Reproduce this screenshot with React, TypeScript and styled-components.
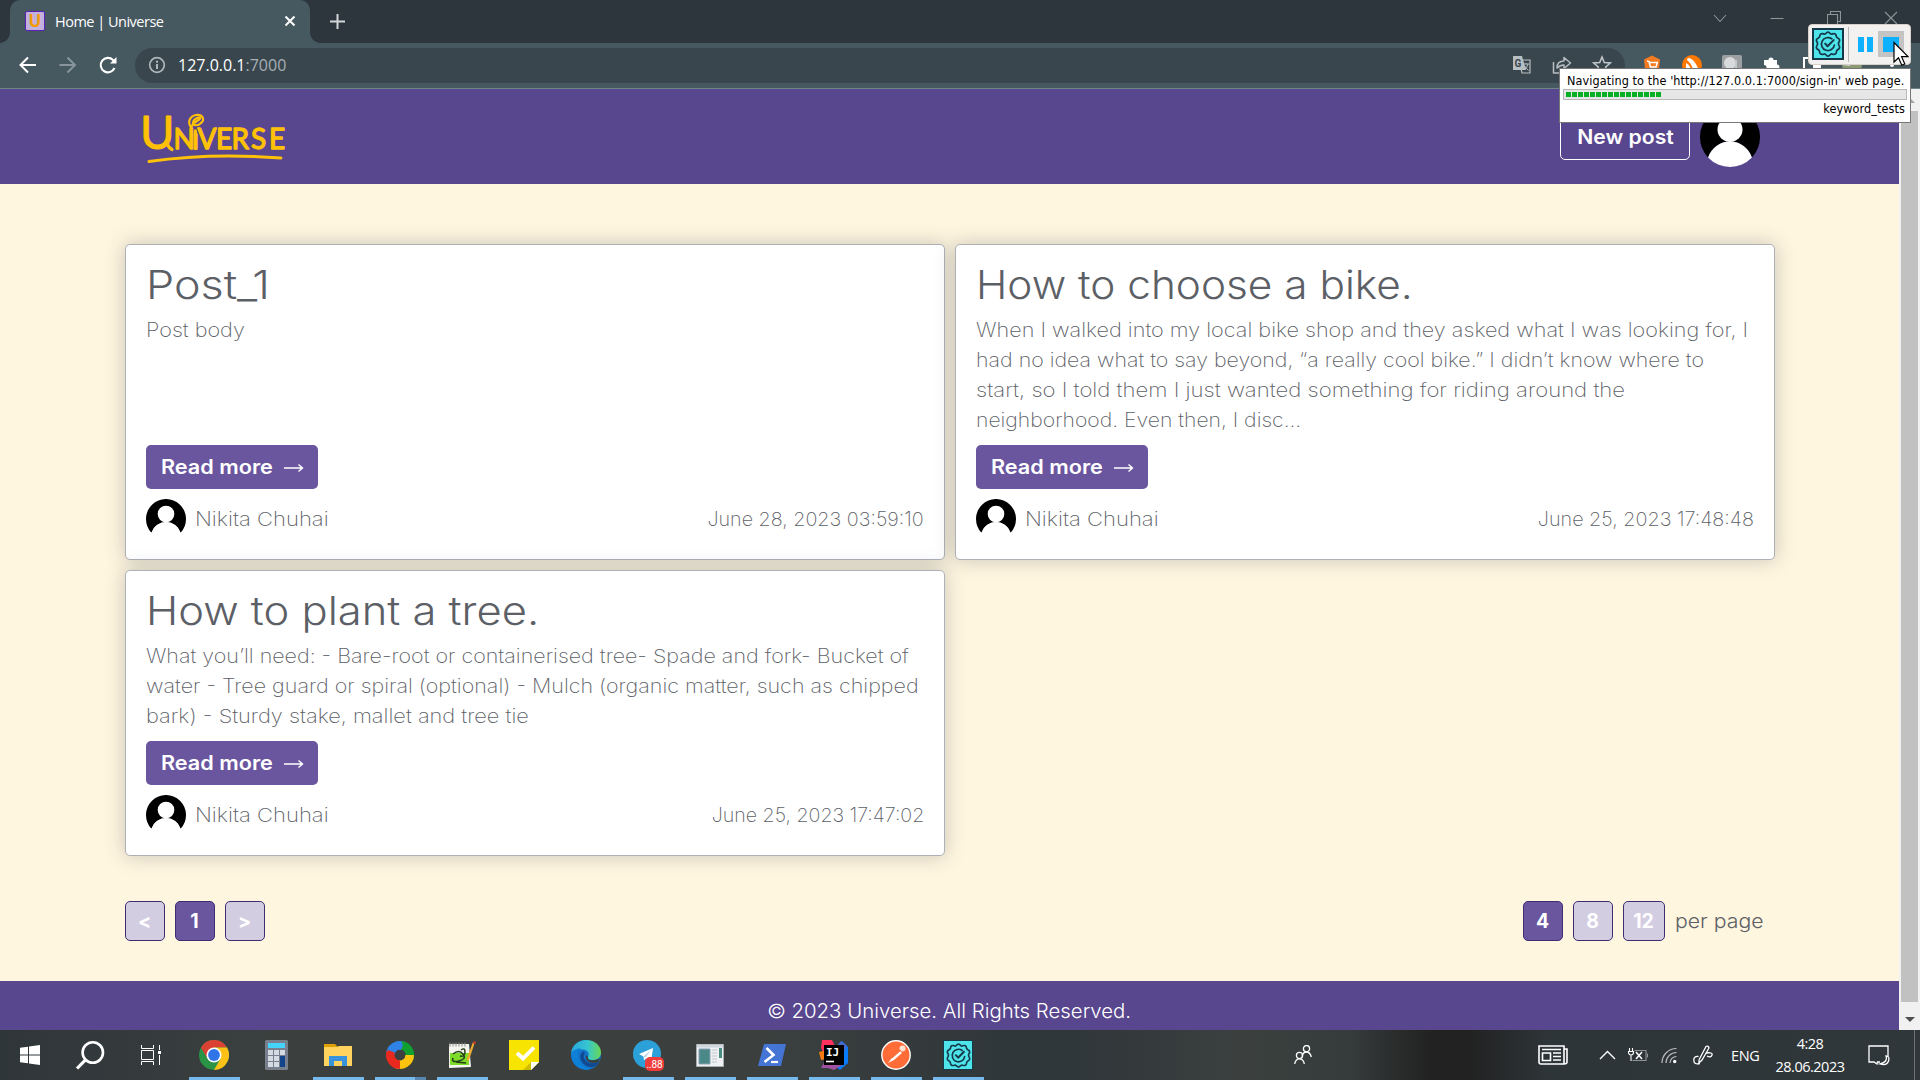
import React from 'react';
import styled, { createGlobalStyle } from 'styled-components';

const GlobalStyle = createGlobalStyle`
  *, *::before, *::after { box-sizing: border-box; }
  html, body { margin: 0; padding: 0; overflow: hidden; }
  svg { display: block; flex: none; }
`;

const uiFont = `'Open Sans', 'Noto Sans', sans-serif`;
const siteFont = `Inter, 'Open Sans', sans-serif`;

const Screen = styled.div`
  position: relative;
  display: flex;
  flex-direction: column;
  width: 1920px;
  height: 1080px;
  overflow: hidden;
  background: #fff6df;
  font-family: ${uiFont};
`;

/* Widened lettering for the site typeface. */
const Wide = styled.span<{ $stretch: number; $from?: string }>`
  display: inline-block;
  transform: scaleX(${(p) => p.$stretch});
  transform-origin: ${(p) => p.$from ?? 'left'} center;
  white-space: nowrap;
`;

/* ---------- browser chrome ---------- */

const TabStrip = styled.div`
  display: flex;
  flex: none;
  height: 43px;
  padding-left: 10px;
  background: #2c363c;
`;

const Tab = styled.div`
  position: relative;
  display: flex;
  align-items: center;
  width: 300px;
  height: 43px;
  padding: 0 14px 1px 15px;
  border-radius: 10px 10px 0 0;
  background: #465860;
  &::before, &::after {
    content: '';
    position: absolute;
    bottom: 0;
    width: 10px;
    height: 10px;
  }
  &::before { left: -10px; background: radial-gradient(circle at 0 0, transparent 9.5px, #465860 10px); }
  &::after { right: -10px; background: radial-gradient(circle at 100% 0, transparent 9.5px, #465860 10px); }
`;

const Favicon = styled.span`
  display: flex;
  align-items: center;
  justify-content: center;
  width: 20px;
  height: 20px;
  border: 1px solid #5b21b6;
  border-radius: 2px;
  background: #c3b1dd;
  color: #f09a0c;
  font: 700 17px/18px 'Open Sans', sans-serif;
`;

const TabTitle = styled.span`
  flex: 1;
  margin-left: 10px;
  color: #fff;
  font-size: 14.5px;
  letter-spacing: -0.5px;
`;

const NewTab = styled.div`
  display: flex;
  align-items: center;
  margin-left: 20px;
  padding-bottom: 1px;
`;

const WindowButtons = styled.div`
  display: flex;
  gap: 43px;
  margin: 11px 22px 0 auto;
`;

const Toolbar = styled.div`
  display: flex;
  flex: none;
  align-items: center;
  height: 46px;
  padding: 0 18px 1px;
  border-bottom: 1px solid #6f8487;
  background: #465860;
`;

const NavButtons = styled.div`
  display: flex;
  gap: 20px;
  width: 117px;
`;

const AddressBar = styled.div`
  display: flex;
  align-items: center;
  width: 1490px;
  height: 35px;
  padding: 0 13px 0 13px;
  border-radius: 18px;
  background: #3a464d;
`;

const Url = styled.span`
  flex: 1;
  margin-left: 12px;
  color: #fff;
  font-size: 16px;
`;

const Port = styled.span`
  color: #a5b0b5;
`;

const AddressActions = styled.div`
  display: flex;
  gap: 20px;
`;

const Extensions = styled.div`
  display: flex;
  gap: 20px;
  margin-left: 17px;
`;

/* ---------- site ---------- */

const Viewport = styled.div`
  display: flex;
  flex: 1;
  min-height: 0;
`;

const Site = styled.div`
  display: flex;
  flex-direction: column;
  width: 1899px;
  background: #fff6df;
  font-family: ${siteFont};
`;

const SiteHeader = styled.header`
  display: flex;
  flex: none;
  align-items: center;
  justify-content: space-between;
  height: 95px;
  padding: 0 139px 0 136px;
  background: #58468e;
`;

const HeaderActions = styled.div`
  display: flex;
  align-items: center;
  gap: 10px;
`;

const NewPostButton = styled.button`
  width: 130px;
  height: 46px;
  padding: 0;
  border: 1px solid #fff;
  border-radius: 5px;
  background: transparent;
  color: #fff;
  font: 600 19.5px/30px ${siteFont};
`;

const Main = styled.main`
  display: flex;
  flex: 1;
  flex-direction: column;
  justify-content: space-between;
  padding: 60px 124px 40px 125px;
`;

const PostGrid = styled.section`
  display: grid;
  grid-template-columns: 820px 820px;
  grid-template-rows: 316px 286px;
  gap: 10px;
`;

const Card = styled.article`
  display: flex;
  flex-direction: column;
  padding: 16px 20px 20px;
  border: 1px solid #adb0b5;
  border-radius: 5px;
  background: #fff;
  box-shadow: 0 0 20px rgba(40, 50, 75, 0.26);
`;

const CardTitle = styled.h2`
  margin: 0 0 6px;
  color: #5c6066;
  font-size: 39px;
  font-weight: 300;
  line-height: 48px;
`;

const CardBody = styled.div`
  flex: 1;
`;

const BodyLine = styled.div`
  height: 30px;
  color: #5c6066;
  font-size: 19.5px;
  font-weight: 250;
  line-height: 30px;
`;

const ReadMore = styled.button`
  display: flex;
  align-items: center;
  justify-content: space-between;
  width: 172px;
  height: 44px;
  padding: 0 14px 0 15px;
  border: 0;
  border-radius: 5px;
  background: #6a569f;
  color: #fff;
  font: 600 19.5px/30px ${siteFont};
`;

const CardFooter = styled.footer`
  display: flex;
  align-items: center;
  height: 40px;
  margin-top: 10px;
  color: #5c6066;
  font-size: 19.5px;
  font-weight: 250;
`;

const Author = styled.span`
  flex: 1;
  margin-left: 9px;
`;

const PagerRow = styled.nav`
  display: flex;
  justify-content: space-between;
`;

const PagerGroup = styled.div`
  display: flex;
  align-items: center;
  gap: 10px;
  color: #5c6066;
  font-size: 19.5px;
`;

const PageButton = styled.button<{ $active?: boolean; $width?: number }>`
  width: ${(p) => p.$width ?? 40}px;
  height: 40px;
  padding: 0 1px 0 0;
  border: 1px solid #3f2d74;
  border-radius: 5px;
  background: ${(p) => (p.$active ? '#6a569f' : '#d3cde2')};
  color: #fff;
  font: 700 19.5px/30px ${siteFont};
`;

const PerPage = styled.span`
  width: 100px;
  font-weight: 350;
`;

const SiteFooter = styled.footer`
  flex: none;
  height: 49px;
  padding-top: 15px;
  background: #58468e;
  color: #fff;
  font-size: 19.5px;
  font-weight: 300;
  line-height: 30px;
  text-align: center;
`;

const Scrollbar = styled.div`
  display: flex;
  flex-direction: column;
  align-items: center;
  justify-content: space-between;
  width: 21px;
  padding: 9px 0 8px;
  background: #f1f1f1;
`;

const ScrollThumb = styled.div`
  width: 17px;
  height: 891px;
  margin: 7px 0 15px;
  background: #c1c1c1;
`;

const ScrollArrow = styled.div<{ $up?: boolean }>`
  width: 0;
  height: 0;
  border: 5px solid transparent;
  ${(p) => (p.$up ? 'border-top: 0; border-bottom-color: #a3a3a3;' : 'border-bottom: 0; border-top-color: #505050;')}
`;

/* ---------- test runner overlay ---------- */

const RunnerBar = styled.div`
  position: absolute;
  top: 24px;
  left: 1808px;
  display: flex;
  align-items: center;
  width: 103px;
  height: 41px;
  padding: 0 6px 1px 3px;
  border: 1px solid #d8cfcb;
  border-radius: 4px;
  background: #f3f1f0;
`;

const RunnerBadge = styled.div`
  display: flex;
  align-items: center;
  justify-content: center;
  width: 32px;
  height: 32px;
  border: 2px solid #17384a;
  background: #4de4ea;
`;

const RunnerDivider = styled.div`
  width: 1px;
  height: 35px;
  margin: 0 9px 0 4px;
  background: #b5b5b5;
`;

const PauseMark = styled.div`
  width: 16px;
  height: 15px;
  border: solid #0db1ff;
  border-width: 0 6px;
`;

const StopButton = styled.div`
  display: flex;
  align-items: center;
  justify-content: center;
  width: 26px;
  height: 26px;
  margin-left: 5px;
  background: #c4c4c4;
`;

const StopMark = styled.div`
  width: 16px;
  height: 15px;
  background: #0db1ff;
`;

const Cursor = styled.div`
  position: absolute;
  top: 41px;
  left: 1893px;
`;

const RunnerStatus = styled.div`
  position: absolute;
  top: 68px;
  left: 1559px;
  width: 352px;
  height: 55px;
  padding: 4px 3px 0;
  border: 1px solid #777;
  background: #fff;
  color: #000;
  font: 12.5px/16px 'DejaVu Sans Condensed', 'DejaVu Sans', sans-serif;
  font-stretch: condensed;
  letter-spacing: 0.1px;
  white-space: nowrap;
`;

const StatusText = styled.div`
  padding-left: 4px;
`;

const StatusProject = styled.div`
  padding: 1px 2px 0;
  letter-spacing: 0.1px;
  text-align: right;
`;

const ProgressTrack = styled.div`
  display: flex;
  gap: 1px;
  height: 11px;
  padding: 2px;
  border: 1px solid #b8b8b8;
  background: #e6e6e6;
`;

const ProgressBlock = styled.i`
  width: 5px;
  height: 5px;
  background: #06b025;
`;

/* ---------- taskbar ---------- */

const Taskbar = styled.div`
  display: flex;
  flex: none;
  height: 50px;
  background: linear-gradient(90deg, #2f363a 0, #3b403f 280px, #3b403f 760px, #30373a 1000px, #30373a 1080px, #3b403f 1240px, #363b3b 1350px, #222 1430px, #222 1470px, #2e3538 1550px, #30373a 1920px);
`;

const TaskCell = styled.div<{ $width?: number }>`
  display: flex;
  flex-direction: column;
  align-items: center;
  justify-content: space-between;
  width: ${(p) => p.$width ?? 62}px;
  height: 50px;
`;

const TaskIcon = styled.div`
  display: flex;
  align-items: center;
  justify-content: center;
  height: 47px;
  padding-top: 3px;
`;

const RunningMark = styled.div<{ $stacked?: boolean }>`
  width: 51px;
  height: 3px;
  border-right: ${(p) => (p.$stacked ? '11px solid #5886ae' : '0')};
  background: #76b9ed;
`;

const Tray = styled.div`
  display: flex;
  flex: 1;
  align-items: center;
  margin-left: 118px;
  color: #fff;
`;

const TraySlot = styled.div<{ $gap: number }>`
  margin-left: ${(p) => p.$gap}px;
`;

const Language = styled.span`
  width: 28px;
  margin-left: 18px;
  font-size: 14.5px;
  letter-spacing: -0.4px;
`;

const Clock = styled.div`
  display: flex;
  flex-direction: column;
  width: 76px;
  margin-left: 13px;
  font-size: 14.5px;
  line-height: 23px;
  letter-spacing: -0.5px;
  text-align: center;
`;

const ShowDesktop = styled.div`
  width: 6px;
  height: 50px;
  margin-left: auto;
  border-left: 1px solid #6c7173;
`;

/* ---------- drawings ---------- */

const Logo = () => (
  <svg width="156" height="76" viewBox="136 99 156 76" fill="#ffc107" stroke="#ffc107" strokeLinejoin="round">
    <text x="140 173.500 192.300 197.500 216 231.500 251 269" y="149" fontFamily="Lato, sans-serif" fontSize="28" strokeWidth="1.300">
      <tspan fontSize="47" strokeWidth="0.900">U</tspan>NıVERSE
    </text>
    <g fill="none" strokeLinecap="round">
      <path d="M195.300 148.500V131" strokeWidth="3.400" />
      <path d="M167 144q2 4 5 5.500" strokeWidth="3.400" />
      <path d="M191 127c-4-5-1-11 5-12 7-1 9 5 5 8-4 4-9 2-8-1s5-5 7-4c1 2-6 3-8 8" strokeWidth="2.200" />
      <path d="M149 161.500C190 155.500 235 154.500 281 158" strokeWidth="3" />
    </g>
  </svg>
);

const Avatar = ({ size }: { size: number }) => (
  <svg width={size} height={size} viewBox="0 0 60 60">
    <path d="M8.100 50.500A30 30 0 1 1 51.900 50.500A23 23 0 0 0 8.100 50.500Z" />
    <path d="M8.100 50.500A23 23 0 0 1 51.900 50.500A30 30 0 0 1 8.100 50.500Z" fill="#fff" />
    <circle cx="30" cy="22.500" r="12.500" fill="#fff" />
  </svg>
);

const LongArrow = () => (
  <svg width="20" height="10" viewBox="0 0 20 10" fill="none" stroke="#fff" strokeWidth="1.400">
    <path d="M0 6h18.500M14.500 2.500 18.500 6l-4 3.500" />
  </svg>
);

const Gear = ({ size, color }: { size: number; color: string }) => (
  <svg width={size} height={size} viewBox="-12 -12 24 24" fill="none" stroke={color} strokeWidth="1.600" strokeLinejoin="round" strokeLinecap="round">
    <path d="M-2.200-9.500Q0-12.500 2.200-9.500Q3-8.800 4-9.300Q7.500-10.500 7.700-7Q8-6 9-5.600Q12-4 9.900-1.500Q9.400-.5 9.900.800Q12 4 9 5.200Q8 5.600 7.800 7Q7.500 10.500 4 9.300Q3 8.900 2.200 9.700Q0 12.500-2.200 9.700Q-3 8.900-4 9.300Q-7.500 10.500-7.800 7Q-8 5.600-9 5.200Q-12 4-9.900.8Q-9.400-.5-9.900-1.500Q-12-4-9-5.600Q-8-6-7.700-7Q-7.500-10.500-4-9.300Q-3-8.800-2.200-9.500Z" />
    <path d="M3.500-4.800A6 6 0 1 0 5.900 1" />
    <path d="m-2.600-.3 2.200 2.400L5.200-3.600" strokeWidth="1.900" />
  </svg>
);

const BackArrow = ({ flip }: { flip?: boolean }) => (
  <svg width="20" height="20" viewBox="0 0 20 20" fill="none" stroke={flip ? '#87959b' : '#fff'} strokeWidth="2">
    <path d={flip ? 'M1.500 10h15M9.500 2.500 17 10l-7.500 7.500' : 'M18 10H3M10 2.500 2.500 10l7.500 7.500'} />
  </svg>
);

const Reload = () => (
  <svg width="20" height="20" viewBox="0 0 20 20" fill="none" stroke="#fff" strokeWidth="2.100">
    <path d="M16.500 13A7.200 7.200 0 1 1 15 5l2 2.200" />
    <path d="M18.500 2v6.500H12z" fill="#fff" stroke="none" />
  </svg>
);

const InfoIcon = () => (
  <svg width="18" height="18" viewBox="0 0 18 18" fill="none" stroke="#aeb6ba" strokeWidth="1.700">
    <circle cx="9" cy="9" r="7.300" />
    <path d="M9 8v5M9 4.800v1.900" strokeWidth="2" />
  </svg>
);

const WindowIcon = ({ d }: { d: string }) => (
  <svg width="14" height="14" viewBox="0 0 14 14" fill="none" stroke="#8d9599" strokeWidth="1.100">
    <path d={d} />
  </svg>
);

const Translate = () => (
  <svg width="20" height="20" viewBox="0 0 20 20">
    <path d="M7 5h11v13h-8z" fill="none" stroke="#b8bfc2" strokeWidth="1.200" />
    <path d="M1 1h9l4 14H1z" fill="#b8bfc2" />
    <text x="2.500" y="11.500" fontSize="10" fontWeight="700" fill="#3a464d" fontFamily="Roboto">G</text>
    <path d="M11 9h6M14 8v1M16 9q-1 4-4 6M12.500 11l4 4.500" stroke="#b8bfc2" fill="none" />
  </svg>
);

const Share = () => (
  <svg width="20" height="20" viewBox="0 0 20 20" fill="none" stroke="#b8bfc2" strokeWidth="1.500" strokeLinejoin="round">
    <path d="M1.500 7v11H16v-4" />
    <path d="M5 13c0-5 3-7 7-7V2.500L18.500 8 12 13.500V10c-3 0-5 1-7 3z" />
  </svg>
);

const Star = () => (
  <svg width="20" height="20" viewBox="0 0 20 20" fill="none" stroke="#c3c9cc" strokeWidth="1.500">
    <path d="m10 2 2.300 5.600 6 .4-4.600 3.900 1.500 5.800L10 14.500l-5.200 3.200 1.500-5.800L1.700 8l6-.4z" />
  </svg>
);

const ShopExtension = () => (
  <svg width="20" height="20" viewBox="0 0 20 20">
    <path d="m10 .5 8 4L17 14l-7 5-7-5L2 4.500z" fill="#f47b20" />
    <path d="m5 6 2 .5L8.500 12H14l1.300-4.500H7.200M8 14.500h1M13 14.500h1" fill="none" stroke="#fff" strokeWidth="1.500" />
  </svg>
);

const AvastExtension = () => (
  <svg width="20" height="20" viewBox="0 0 20 20">
    <circle cx="10" cy="10" r="10" fill="#ff7800" />
    <path d="M5 5q0-2 2-2 5 1 9 10-2 3-5 1Q9 8 5 5z" fill="#fff" />
    <path d="M4 8q4 2 5 7-3 2-5-1z" fill="#fff" />
  </svg>
);

const GreyExtension = () => (
  <svg width="20" height="20" viewBox="0 0 20 20">
    <rect width="20" height="20" rx="2" fill="#9ca0a3" />
    <circle cx="8" cy="8" r="6" fill="#d9dadb" />
    <path d="M14 5v10H9" fill="none" stroke="#c5c8ca" strokeWidth="2" />
  </svg>
);

const Puzzle = () => (
  <svg width="20" height="20" viewBox="0 0 20 20" fill="#fff">
    <path d="M2 5h4.500a2.500 2.500 0 1 1 5 0H15v4.500a2.500 2.500 0 1 1 0 5V19H2v-4a2.500 2.500 0 1 0 0-5z" />
  </svg>
);

const SidePanel = () => (
  <svg width="20" height="20" viewBox="0 0 20 20">
    <path d="M2 3h16v14H2z" fill="none" stroke="#fff" strokeWidth="2" />
    <path d="M11 3h7v14h-7z" fill="#fff" />
  </svg>
);

const ProfilePicture = () => (
  <svg width="20" height="20" viewBox="0 0 20 20">
    <circle cx="10" cy="10" r="10" fill="#8b9a72" />
    <path d="M0 10a10 10 0 0 1 8-9.800V11z" fill="#cfd8dc" />
  </svg>
);

const MenuDots = () => (
  <svg width="20" height="20" viewBox="0 0 20 20" fill="#fff">
    <circle cx="10" cy="4" r="2" /><circle cx="10" cy="10" r="2" /><circle cx="10" cy="16" r="2" />
  </svg>
);

const Windows = () => (
  <svg width="20" height="20" viewBox="0 0 20 20" fill="#fff">
    <path d="M0 2.800 8 1.700V9.500H0zM9 1.500 20 0v9.500H9zM0 10.500h8v7.800L0 17.200zM9 10.500h11V20L9 18.500z" />
  </svg>
);

const SearchIcon = () => (
  <svg width="30" height="30" viewBox="0 0 30 30" fill="none" stroke="#fff">
    <circle cx="17.800" cy="12.500" r="10.200" strokeWidth="2.600" />
    <path d="M10.500 19.800 2 28.500" strokeWidth="3.200" />
  </svg>
);

const TaskView = () => (
  <svg width="24" height="20" viewBox="0 0 24 20" fill="none" stroke="#fff">
    <path d="M1.500 0v3.500h12V0M1.500 20v-3.500h12V20M1.500 5.500h12v9h-12zM19.500 0v5M19.500 10v10" />
    <path d="M18 6h3v3h-3z" fill="#fff" stroke="none" />
  </svg>
);

const Chrome = () => (
  <svg width="30" height="30" viewBox="-15 -15 30 30">
    <circle r="15" fill="#2a9346" />
    <path d="M-13-7.500A15 15 0 0 1 13-7.500H0L-6.500 3.800z" fill="#dc4234" />
    <path d="M13-7.500A15 15 0 0 1 0 15L6.500 3.800 0-7.500z" fill="#fbc116" />
    <circle r="7.500" fill="#fff" />
    <circle r="5.900" fill="#2f75e8" />
  </svg>
);

const Calculator = () => (
  <svg width="23" height="30" viewBox="0 0 23 30">
    <rect width="23" height="30" rx="1.500" fill="#77808c" />
    <rect x="3" y="3" width="17" height="5" fill="#43d3fb" />
    <path d="M3 10h5v5H3zM9 10h5v5H9zM15 10h5v5h-5zM3 16h5v5H3zM9 16h5v5H9zM3 22h5v5H3zM9 22h5v5H9z" fill="#d3dae2" />
    <path d="M15 16h5v11h-5z" fill="#11448a" />
  </svg>
);

const Folder = () => (
  <svg width="28" height="24" viewBox="0 0 28 24">
    <path d="M0 1h11l3 3-3 3H0z" fill="#dea004" />
    <path d="M0 4h13l2-1h13v20H0z" fill="#ffd35d" />
    <path d="M5 23V13h18v10h-5v-5h-8v5z" fill="#3794dc" />
  </svg>
);

const ColorRing = () => (
  <svg width="30" height="30" viewBox="-15 -15 30 30" fill="none" strokeWidth="8.500">
    <path d="M-9.700 0A9.700 9.700 0 0 1 4-8.800" stroke="#2f83e8" />
    <path d="M0-9.700A9.700 9.700 0 0 1 9 4" stroke="#10a030" />
    <path d="M9.700 0A9.700 9.700 0 0 1-4 8.800" stroke="#fbc20e" />
    <path d="M0 9.700A9.700 9.700 0 0 1-9-3.800" stroke="#e9291d" />
    <path d="M-13.500-3Q-7-10 0-5 5-9 1-14-10-13-13.500-3z" fill="#2f83e8" stroke="none" />
  </svg>
);

const NotepadPlus = () => (
  <svg width="28" height="28" viewBox="0 0 28 28">
    <path d="M1 3h20l2 23-22 1z" fill="#f4f5ee" />
    <path d="M2 12h19v12H2z" fill="#7ddc2a" />
    <path d="M2 1.500v4M5 1.500v4M8 1.500v4M11 1.500v4M14 1.500v4M17 1.500v4" stroke="#888" />
    <path d="M5 13q6-5 10 0t-4 7-6-3M13 9q4-3 4 2t-5 4M8 21l10 1" fill="none" stroke="#263d1b" strokeWidth="1.500" />
    <path d="m27 1-6 18-2 1v-3L25 1z" fill="#eda92c" />
    <circle cx="26.500" cy="1.500" r="1.500" fill="#bd3a2e" />
  </svg>
);

const StickyNote = () => (
  <svg width="30" height="30" viewBox="0 0 30 30">
    <path d="M0 0h30v22l-8 8H0z" fill="#f7e400" />
    <path d="M14 30 22 22h8l-8 8z" fill="#cfbe00" />
    <path d="M22 22h8l-8 8z" fill="#fff" />
    <path d="m8 13 6 5.500L25 7.500" fill="none" stroke="#fff" strokeWidth="3.800" />
  </svg>
);

const Edge = () => (
  <svg width="30" height="30" viewBox="0 0 30 30">
    <defs>
      <linearGradient id="edgeTop"><stop stopColor="#2aa7df" /><stop offset=".55" stopColor="#35c5d0" /><stop offset="1" stopColor="#68d852" /></linearGradient>
    </defs>
    <circle cx="15" cy="15" r="15" fill="#1273ca" />
    <path d="M0 13C1 5 8 0 15 0c9 0 15 6 15 12.500 0 5-4 7.500-8 7.500-4 0-6-1-5-3 2-3 0-7-5-7.500Q4 9 0 13z" fill="url(#edgeTop)" />
    <path d="M0 13q4-5 10-4.500Q5 13 8 20t12 9Q13 31 7 27T0 13z" fill="#0f80d8" />
    <path d="M12 11q-5 5-1 11t11 5q4-1 6-5-9 3-13-1t-1-8z" fill="#114a91" />
    <path d="M17 17q-1 4 7 3l5-1.500-1 3.500q-6 2-10 0t-3-7z" fill="#3b403f" />
  </svg>
);

const Telegram = () => (
  <svg width="32" height="32" viewBox="1 0 32 32">
    <circle cx="16" cy="15" r="14" fill="#2ca0d8" />
    <path d="m8 15 14-6-2 14-5-3.500-2 2-.5-4z" fill="#fff" />
    <path d="m12.500 17.500 8-7-6 8" fill="#b8d6e8" />
    <rect x="14" y="18" width="19" height="14" rx="5" fill="#ee3c3a" />
    <text x="15.500" y="29" fontSize="10" fill="#fff" fontFamily="Roboto" textLength="16">..88</text>
  </svg>
);

const AppWindow = () => (
  <svg width="28" height="24" viewBox="0 0 28 24">
    <path d="M.5 1.500h27v22H.5z" fill="#eef0f1" stroke="#a9adb0" />
    <path d="M1 1.500h26v3H1z" fill="#cfd6dc" />
    <path d="M3 6h11v15H3z" fill="#4b8888" stroke="#8aa0b5" />
    <path d="M16 7h5M16 10h5M16 13h5M16 16h5M16 19h5" stroke="#c3c7cb" />
    <path d="M23 5h3v10h-3z" fill="#4b8c80" />
  </svg>
);

const PowerShell = () => (
  <svg width="28" height="22" viewBox="0 0 28 22">
    <path d="M6 0h22l-5 22H0z" fill="#4474d4" />
    <path d="m8.500 4 7 7-9 7" fill="none" stroke="#fff" strokeWidth="2.600" />
    <path d="M13 18h7" stroke="#fff" strokeWidth="2.200" />
  </svg>
);

const IntelliJ = () => (
  <svg width="30" height="30" viewBox="0 0 30 30">
    <path d="M3 0h10l4 8L6 16 2 8z" fill="#fe315d" />
    <path d="m0 12 8-2v9l-6 1z" fill="#f97a12" />
    <path d="m18 6 5-5 6 6v16l-8 7-10-8z" fill="#087cfa" />
    <path d="m18 6 4-5 6 5-3 6z" fill="#4668cf" />
    <path d="m2 28 5-9 16 6-8 5-6-2z" fill="#a052a0" />
    <path d="M5 5h20v20H5z" fill="#000" />
    <text x="7" y="15.500" fontSize="11" fontWeight="700" fill="#fff" fontFamily="'DejaVu Sans Mono'" textLength="13">IJ</text>
    <path d="M7 21.500h8" stroke="#fff" strokeWidth="1.600" />
  </svg>
);

const Postman = () => (
  <svg width="30" height="30" viewBox="0 0 30 30">
    <circle cx="15" cy="15" r="14.200" fill="#ff6c37" stroke="#fff" strokeWidth="1.400" />
    <path d="m7 23 4-5 8-7 2 2-8 7z" fill="#fff" />
    <circle cx="21.500" cy="8.500" r="3" fill="#ffe3d7" />
    <path d="m11 18 9-8" stroke="#ff6c37" />
  </svg>
);

const TestBadge = styled.div`
  display: flex;
  align-items: center;
  justify-content: center;
  width: 30px;
  height: 30px;
  border: 1px solid #17384a;
  background: #4de4ea;
`;

const People = () => (
  <svg width="18" height="20" viewBox="0 0 18 20" fill="none" stroke="#fff" strokeWidth="1.300">
    <circle cx="12.500" cy="3.700" r="3.100" />
    <path d="M8 11.500Q9 7 12.500 7T17.300 12" />
    <circle cx="5.500" cy="10.500" r="3.100" />
    <path d="M.7 19Q1.500 13.800 5.500 13.800T10.300 19" />
  </svg>
);

const News = () => (
  <svg width="30" height="20" viewBox="0 0 30 20" fill="none" stroke="#fff" strokeWidth="1.600">
    <path d="M1 1h25v18H3q-2 0-2-2zM26 4h3v13q0 2-3 2" />
    <path d="M4 4.500h19M4.500 8h8v7.500h-8zM15 8h8M15 11.500h8M15 15h8" />
  </svg>
);

const TrayChevron = () => (
  <svg width="17" height="10" viewBox="0 0 17 10" fill="none" stroke="#fff" strokeWidth="1.400"><path d="m1 9 7.500-7.500L16 9" /></svg>
);

const Battery = () => (
  <svg width="20" height="14" viewBox="0 0 20 14" fill="none" stroke="#fff" strokeWidth="1.100">
    <path d="M1.500 0v3M4.500 0v3M.5 3.500h5V5Q5 7 3 7T.5 5zM3 7v6" />
    <path d="M6.500 2.500H18v10H4.500M19.500 5.500v4" stroke="#8f9496" />
    <path d="m8 4 6 7M14 4l-6 7" strokeWidth="1.500" />
  </svg>
);

const Wifi = () => (
  <svg width="16" height="17" viewBox="0 0 16 17" fill="none" stroke="#fff" strokeWidth="1.200">
    <path d="M1 16A14.500 14.500 0 0 1 15.500 1.500M5 16A10.500 10.500 0 0 1 15.500 5.500M9 16a6.500 6.500 0 0 1 6.500-6.500" stroke="#b9bdbe" />
    <circle cx="13.700" cy="14.500" r="1.700" fill="#fff" stroke="none" />
  </svg>
);

const Pen = () => (
  <svg width="20" height="20" viewBox="0 0 20 20" fill="none" stroke="#fff" strokeWidth="1.300">
    <path d="M6 15 13 1.500q2.500-1 3 1.500L9 15l-3 3z" />
    <path d="M5.500 11.500Q.5 11 .8 15.500t6 3M13 8q7-1 6 2t-5 1" />
  </svg>
);

const Notifications = () => (
  <svg width="22" height="21" viewBox="0 0 22 21" fill="none" stroke="#fff" strokeWidth="1.300">
    <path d="M12 17H9.500L9 19l-3-2H1V1h19v10" />
    <path d="M18 11q2 6-6 8 7 2 8.500-3T18 11z" />
  </svg>
);

/* ---------- content ---------- */

type Line = [text: string, stretch: number];
interface Post { title: Line; lines: Line[]; date: Line }

const posts: Post[] = [
  { title: ['Post_1', 1.15], lines: [['Post body', 1.108]], date: ['June 28, 2023 03:59:10', 1.012] },
  {
    title: ['How to choose a bike.', 1.085],
    lines: [
      ['When I walked into my local bike shop and they asked what I was looking for, I', 1.109],
      ['had no idea what to say beyond, “a really cool bike.” I didn’t know where to', 1.095],
      ['start, so I told them I just wanted something for riding around the', 1.134],
      ['neighborhood. Even then, I disc...', 1.085],
    ],
    date: ['June 25, 2023 17:48:48', 1.015],
  },
  {
    title: ['How to plant a tree.', 1.115],
    lines: [
      ['What you’ll need: - Bare-root or containerised tree- Spade and fork- Bucket of', 1.101],
      ['water - Tree guard or spiral (optional) - Mulch (organic matter, such as chipped', 1.102],
      ['bark) - Sturdy stake, mallet and tree tie', 1.117],
    ],
    date: ['June 25, 2023 17:47:02', 1.006],
  },
];

const apps: { icon: React.ReactNode; running?: boolean; stacked?: boolean }[] = [
  { icon: <Chrome />, running: true },
  { icon: <Calculator /> },
  { icon: <Folder />, running: true },
  { icon: <ColorRing />, running: true, stacked: true },
  { icon: <NotepadPlus />, running: true },
  { icon: <StickyNote /> },
  { icon: <Edge /> },
  { icon: <Telegram />, running: true },
  { icon: <AppWindow />, running: true },
  { icon: <PowerShell />, running: true },
  { icon: <IntelliJ />, running: true },
  { icon: <Postman />, running: true },
  { icon: <TestBadge><Gear size={25} color="#17384a" /></TestBadge>, running: true },
];

const PostCard = ({ post }: { post: Post }) => (
  <Card>
    <CardTitle><Wide $stretch={post.title[1]}>{post.title[0]}</Wide></CardTitle>
    <CardBody>
      {post.lines.map(([text, stretch]) => (
        <BodyLine key={text}><Wide $stretch={stretch}>{text}</Wide></BodyLine>
      ))}
    </CardBody>
    <ReadMore><Wide $stretch={1.11}>Read more</Wide><LongArrow /></ReadMore>
    <CardFooter>
      <Avatar size={40} />
      <Author><Wide $stretch={1.13}>Nikita Chuhai</Wide></Author>
      <Wide as="time" $stretch={post.date[1]} $from="right">{post.date[0]}</Wide>
    </CardFooter>
  </Card>
);

export default function App() {
  return (
    <>
      <GlobalStyle />
      <Screen>
        <TabStrip>
          <Tab>
            <Favicon>U</Favicon>
            <TabTitle>Home | Universe</TabTitle>
            <svg width="12" height="12" viewBox="0 0 12 12" stroke="#fff" strokeWidth="2"><path d="m1.500 1.500 9 9M10.500 1.500l-9 9" /></svg>
          </Tab>
          <NewTab>
            <svg width="15" height="15" viewBox="0 0 15 15" stroke="#d3d7d8" strokeWidth="2"><path d="M7.500 0v15M0 7.500h15" /></svg>
          </NewTab>
          <WindowButtons>
            <WindowIcon d="m1 4 6 6.500L13 4" />
            <WindowIcon d="M.5 7.500h13" />
            <WindowIcon d="M.5 3.500h10v10H.5zM3.500 3.500v-3h10v10h-3" />
            <WindowIcon d="m1 1 12 12M13 1 1 13" />
          </WindowButtons>
        </TabStrip>
        <Toolbar>
          <NavButtons><BackArrow /><BackArrow flip /><Reload /></NavButtons>
          <AddressBar>
            <InfoIcon />
            <Url>127.0.0.1<Port>:7000</Port></Url>
            <AddressActions><Translate /><Share /><Star /></AddressActions>
          </AddressBar>
          <Extensions>
            <ShopExtension /><AvastExtension /><GreyExtension /><Puzzle /><SidePanel /><ProfilePicture /><MenuDots />
          </Extensions>
        </Toolbar>

        <Viewport>
          <Site>
            <SiteHeader>
              <Logo />
              <HeaderActions>
                <NewPostButton><Wide $stretch={1.085} $from="center">New post</Wide></NewPostButton>
                <Avatar size={60} />
              </HeaderActions>
            </SiteHeader>
            <Main>
              <PostGrid>
                {posts.map((post) => <PostCard key={post.title[0]} post={post} />)}
              </PostGrid>
              <PagerRow>
                <PagerGroup>
                  <PageButton>&lt;</PageButton>
                  <PageButton $active>1</PageButton>
                  <PageButton>&gt;</PageButton>
                </PagerGroup>
                <PagerGroup>
                  <PageButton $active>4</PageButton>
                  <PageButton>8</PageButton>
                  <PageButton $width={42}>12</PageButton>
                  <PerPage><Wide $stretch={1.09}>per page</Wide></PerPage>
                </PagerGroup>
              </PagerRow>
            </Main>
            <SiteFooter>
              <Wide $stretch={1.045} $from="center">© 2023 Universe. All Rights Reserved.</Wide>
            </SiteFooter>
          </Site>
          <Scrollbar>
            <ScrollArrow $up />
            <ScrollThumb />
            <ScrollArrow />
          </Scrollbar>
        </Viewport>

        <Taskbar>
          <TaskCell $width={60}><TaskIcon><Windows /></TaskIcon></TaskCell>
          <TaskCell $width={60}><TaskIcon><SearchIcon /></TaskIcon></TaskCell>
          <TaskCell $width={63}><TaskIcon><TaskView /></TaskIcon></TaskCell>
          {apps.map((app, i) => (
            <TaskCell key={i}>
              <TaskIcon>{app.icon}</TaskIcon>
              {app.running && <RunningMark $stacked={app.stacked} />}
            </TaskCell>
          ))}
          <Tray>
            <TraySlot $gap={187}><People /></TraySlot>
            <TraySlot $gap={226}><News /></TraySlot>
            <TraySlot $gap={31}><TrayChevron /></TraySlot>
            <TraySlot $gap={12}><Battery /></TraySlot>
            <TraySlot $gap={13}><Wifi /></TraySlot>
            <TraySlot $gap={16}><Pen /></TraySlot>
            <Language>ENG</Language>
            <Clock><span>4:28</span><span>28.06.2023</span></Clock>
            <TraySlot $gap={20}><Notifications /></TraySlot>
            <ShowDesktop />
          </Tray>
        </Taskbar>

        <RunnerBar>
          <RunnerBadge><Gear size={26} color="#17384a" /></RunnerBadge>
          <RunnerDivider />
          <PauseMark />
          <StopButton><StopMark /></StopButton>
        </RunnerBar>
        <RunnerStatus>
          <StatusText>Navigating to the 'http://127.0.0.1:7000/sign-in' web page.</StatusText>
          <ProgressTrack>
            {Array.from({ length: 16 }, (_, i) => <ProgressBlock key={i} />)}
          </ProgressTrack>
          <StatusProject>keyword_tests</StatusProject>
        </RunnerStatus>
        <Cursor>
          <svg width="16" height="26" viewBox="0 0 16 26" fill="#fff" stroke="#000" strokeWidth="1.200">
            <path d="M1 1.500v19.500l4.500-4.200 3.300 7.500 3-1.300-3.200-7.300H15z" />
          </svg>
        </Cursor>
      </Screen>
    </>
  );
}
